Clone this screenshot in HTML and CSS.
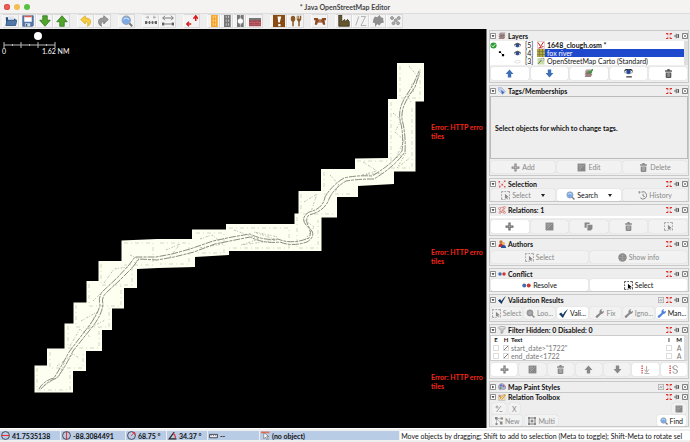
FILE: index.html
```html
<!DOCTYPE html>
<html lang="en">
<head>
<meta charset="utf-8">
<title>Java OpenStreetMap Editor</title>
<link rel="stylesheet" href="styles.css">
</head>
<body>
<svg class="defs" aria-hidden="true">
  <symbol id="arrow-up" viewBox="0 0 16 16"><path d="M8 1 15 9H11V15H5V9H1Z"/></symbol>
  <symbol id="arrow-down" viewBox="0 0 16 16"><path d="M8 15 15 7H11V1H5V7H1Z"/></symbol>
  <symbol id="plus" viewBox="0 0 16 16"><path d="M6 1h4v5h5v4h-5v5H6v-5H1V6h5Z"/><path d="M8 3v10M3 8h10" stroke="#fff" stroke-opacity=".45" stroke-width="1"/></symbol>
  <symbol id="edit" viewBox="0 0 16 16"><path d="M1 1h14v14H1Z"/><path d="M3 13 13 3M3 4h6M3 7h4" stroke="#bbb" stroke-width="1"/></symbol>
  <symbol id="trash" viewBox="0 0 16 16"><path d="M6 0h4v2h4v3H2V2h4ZM3 6h10v8q0 2-2 2H5q-2 0-2-2Z"/><path d="M6 7v7M8 7v7M10 7v7" stroke="#ccc" stroke-width=".8"/></symbol>
  <symbol id="copy" viewBox="0 0 16 16"><path d="M1 1h9v3H5v6H1Z"/><path d="M6 5h9v7l-3 3H6Z"/><path d="M5.500 11V4.500H11" fill="none" stroke="#ddd"/></symbol>
  <symbol id="select" viewBox="0 0 16 16"><path d="M1 4V1h3M6 1h3M11 1h4v3M15 6v3M1 6v3M1 11v4h3M15 11v4M6 15h2" fill="none" stroke="currentColor" stroke-width="1.300"/><path d="M7 5v9l2-2 2 3 1-1-1-3h3Z"/></symbol>
  <symbol id="lens" viewBox="0 0 16 16"><path d="m10 10 5 5" stroke="#777" stroke-width="2.500"/><circle cx="7" cy="7" r="5.500" fill="#78a9e8" stroke="#98a4b4" stroke-width="1.500"/><path d="M3.500 6q3-4 7 0" stroke="#d5e7ff" fill="none" stroke-width="1.500"/></symbol>
  <symbol id="lens-gray" viewBox="0 0 16 16"><path d="m10 10 5 5" stroke="#888" stroke-width="2.500"/><circle cx="7" cy="7" r="5.500" fill="#999" stroke="#888"/><path d="M3 7h8M7 3v8" stroke="#bbb"/></symbol>
  <symbol id="history" viewBox="0 0 16 16"><path d="M6 2a6.500 6.500 0 1 1-2 10M9 5v4l3 1" fill="none" stroke="#777" stroke-width="1.500"/><path d="M0 2h5M2.500 0v5" stroke="#777"/></symbol>
  <symbol id="check" viewBox="0 0 16 16"><path d="m0 9 4-3 3 4Q10 4 16 0 11 8 7 16Z"/></symbol>
  <symbol id="wrench" viewBox="0 0 16 16"><path d="M1 13 8 7q-1-4 2-6l3-1-2 3 2 2 3-2q0 5-5 6L4 16Q1 16 1 13Z"/></symbol>
  <symbol id="eye" viewBox="0 0 16 16"><path d="M0 8Q8 0 16 8 8 15 0 8Z" fill="#fff" stroke="#555"/><circle cx="8" cy="8" r="4" fill="#224898"/><path d="M1 6Q8 0 15 6" fill="none" stroke="#222" stroke-width="2"/></symbol>
  <symbol id="closed-eye" viewBox="0 0 16 16"><path d="M1 9Q8 1 15 9 8 15 1 9Z" fill="#fff" stroke="#bbb"/></symbol>
  <symbol id="stack" viewBox="0 0 16 16"><path d="M4 1h11l-3 5H1Z" fill="#ad9a9a"/><path d="M4 5h11l-3 5H1Z" fill="#8b7474"/><path d="M4 9h11l-3 5H1Z" fill="#9f8080"/></symbol>
  <symbol id="fold" viewBox="0 0 16 16"><rect x="1" y="1" width="14" height="14" rx="2" fill="#fff" stroke="#555" stroke-width="2"/><path d="M4 6h8l-4 5Z" fill="#222"/></symbol>
  <symbol id="unfold" viewBox="0 0 16 16"><rect x="1" y="1" width="14" height="14" rx="2" fill="#fff" stroke="#555" stroke-width="2"/><path d="m6 4 5 4-5 4Z" fill="#222"/></symbol>
  <symbol id="jump" viewBox="0 0 16 16"><path d="M0 0h6v6H4V3H0ZM16 0h-6v6h2V3h4ZM0 16h6v-6H4v3H0ZM16 16h-6v-6h2v3h4Z" fill="#e02f2f"/></symbol>
  <symbol id="pin" viewBox="0 0 16 16"><path d="M0 8h6M6 2v12M7 5h5v6H7M12 3v10" fill="none" stroke="#444" stroke-width="2"/></symbol>
  <symbol id="close" viewBox="0 0 16 16"><rect x="1" y="1" width="14" height="14" rx="2" fill="#fff" stroke="#444" stroke-width="2"/><path d="m4 4 8 8M12 4l-8 8" stroke="#777" stroke-width="2"/></symbol>
  <symbol id="prefs" viewBox="0 0 16 16"><rect x="1" y="1" width="14" height="14" fill="#eee" stroke="#aaa" stroke-width="2"/><path d="m4 11 3-5 2 5 3-6" fill="none" stroke="#888" stroke-width="1.500"/></symbol>
  <symbol id="tag" viewBox="0 0 16 16"><path d="M1 1h6l8 8-6 6-8-8Z" fill="#c1cfea" stroke="#8ea0c8"/><path d="m6 6 7 5-5 3Z" fill="#4067b4"/></symbol>
  <symbol id="sel-head" viewBox="0 0 16 16"><path d="M2 3 8 9l5-7M3 13l5-4 6 5M2 4v9" fill="none" stroke="#e99" stroke-width="1"/><path d="M1 2h3v3H1zM7 8h3v3H7zM12 1h3v3h-3zM2 12h3v3H2zM12 12h3v3h-3z" fill="#e25555"/></symbol>
  <symbol id="relation" viewBox="0 0 16 16"><path d="M3 5 7 3l6-1-2 6-6 4-2-7m8 3 3 5-9-1" fill="none" stroke="#cc746a" stroke-width="1.500"/><g fill="#f2d8d2" stroke="#c66"><circle cx="3" cy="5" r="2"/><circle cx="13" cy="3" r="2"/><circle cx="10" cy="8" r="2"/><circle cx="4" cy="13" r="2"/><circle cx="13" cy="13" r="2"/></g></symbol>
  <symbol id="authors" viewBox="0 0 16 16"><circle cx="6" cy="4" r="3.500" fill="#c47938"/><path d="M1 14q0-7 5-7t5 7Z" fill="#c62f2b"/><circle cx="11" cy="7" r="3" fill="#e9b35e"/><path d="M6 16q0-6 5-6t5 6Z" fill="#254f9f"/></symbol>
  <symbol id="conflict" viewBox="0 0 16 16"><circle cx="4" cy="8" r="3.500" fill="#426cae"/><circle cx="12" cy="8" r="3.500" fill="#cf3636"/></symbol>
  <symbol id="funnel" viewBox="0 0 16 16"><ellipse cx="8" cy="3" rx="7" ry="2" fill="#eee" stroke="#777"/><path d="M1 4 6 9v6l4-2V9l5-5" fill="#ccc" stroke="#777"/></symbol>
  <symbol id="palette" viewBox="0 0 16 16"><path d="M2 4Q8-2 14 5t-4 8q-4-2-5 1Q-1 12 2 4Z" fill="#aeb3d0" stroke="#778"/><circle cx="6" cy="5" r="2" fill="#4169c7"/><circle cx="11" cy="6" r="2" fill="#a24fa8"/><circle cx="5" cy="10" r="2" fill="#599e52"/></symbol>
  <symbol id="toolbox" viewBox="0 0 16 16"><path d="M1 4h13v11H1Z" fill="#eee4ca" stroke="#aaa"/><path d="m3 13 9-10 3 1-8 10M2 7l4 3" stroke="#d7a12e" stroke-width="2" fill="none"/><circle cx="4" cy="6" r="2" fill="#dd7563"/></symbol>
  <symbol id="dots-down" viewBox="0 0 16 16"><path d="M2 1v2M2 5v2M2 9v2M2 13v2" stroke="#e03434" stroke-width="2.500"/><path d="M10 2v9M6 8l4 5 4-5M6 15h9" stroke="#888" stroke-width="1.300" fill="none"/></symbol>
  <symbol id="dots-turn" viewBox="0 0 16 16"><path d="M2 1v2M2 5v2M2 9v2M2 13v2" stroke="#e03434" stroke-width="2.500"/><path d="M7 5q0-4 4-4t4 4M7 3v3h3M15 11q0 4-4 4t-4-4M15 13v-3h-3M8 8h6" stroke="#888" stroke-width="1.300" fill="none"/></symbol>
</svg>

<header class="titlebar">
  <div class="lights"><button class="light red" aria-label="Close"></button><button class="light amber" aria-label="Minimize"></button><button class="light green" aria-label="Zoom"></button></div>
  <h1>* Java OpenStreetMap Editor</h1>
</header>

<nav class="toolbar" aria-label="Tools">
  <div class="group">
    <button aria-label="Open"><svg viewBox="0 0 16 16"><path d="M1 3h5l1 2h7v9H2Z" fill="#284f83"/><path d="M4 2h8v5H4Z" fill="#dce5ee"/><path d="M1 14 3 7h13l-2 7Z" fill="#5278a7" stroke="#31537d"/></svg></button>
    <button aria-label="Save"><svg viewBox="0 0 16 16"><path d="M1 1h14v13l-1 1H1Z" fill="#5476aa" stroke="#425f94"/><path d="M3 1h10v8H3Z" fill="#fff"/><path d="M3 1h10v2H3Z" fill="#d75d54"/><path d="M4 11h7v4H4Z" fill="#d9dfe7"/><path d="M5 12h2v3H5Z" fill="#465d7e"/></svg></button>
    <button aria-label="Download"><svg viewBox="0 0 16 16" fill="#51a52b" stroke="#2c701c"><use href="#arrow-down"/></svg></button>
    <button aria-label="Upload"><svg viewBox="0 0 16 16" fill="#51a52b" stroke="#2c701c"><use href="#arrow-up"/></svg></button>
  </div>
  <div class="group">
    <button aria-label="Undo"><svg viewBox="0 0 16 16"><path d="M1 6 7 1v3q8 0 7 6 0 3-4 5 2-6-3-6v3Z" fill="#f6cd3e" stroke="#d6a822"/></svg></button>
    <button aria-label="Redo"><svg viewBox="0 0 16 16"><path d="M15 6 9 1v3q-8 0-7 6 0 3 4 5-2-6 3-6v3Z" fill="#9a9a9a" stroke="#777"/></svg></button>
  </div>
  <div class="group"><button aria-label="Search"><svg><use href="#lens"/></svg></button></div>
  <div class="group">
    <button aria-label="Distribute nodes"><svg viewBox="0 0 16 16"><path d="M1 3h4m6 0h4M4 1v4m8-4v4M0 10h16" stroke="#999"/><path d="M0 8h3v4H0zM5 8h2v4H5zM9 8h2v4H9zM13 8h3v4h-3z" fill="#666"/></svg></button>
    <button aria-label="Align nodes"><svg viewBox="0 0 16 16"><path d="M1 4h14M4 1 1 4l3 3M12 1l3 3-3 3M2 12h12" fill="none" stroke="#777" stroke-width="1.300"/><path d="M0 10h3v4H0zM13 10h3v4h-3z" fill="#666"/></svg></button>
  </div>
  <div class="group"><button aria-label="Follow line"><svg viewBox="0 0 16 16"><path d="M7 12H2M4 9l-3 3 3 3M13 8V2M10 5l3-4 3 4" fill="none" stroke="#dc1d20" stroke-width="2"/></svg></button></div>
  <div class="group">
    <button class="narrow" aria-label="Motorway"><svg viewBox="0 0 16 16"><path d="M4 0h9v16H4Z" fill="#f8a52b"/><path d="M7 1v14M10 1v14" stroke="#fff" stroke-opacity=".7" stroke-dasharray="3 2"/></svg></button>
    <button class="narrow" aria-label="Road"><svg viewBox="0 0 16 16"><path d="M4 0h9v16H4Z" fill="#777"/><path d="M7 1v14M10 1v14" stroke="#fff" stroke-opacity=".7" stroke-dasharray="3 2"/></svg></button>
    <button class="narrow" aria-label="Crossing"><svg viewBox="0 0 16 16"><path d="M4 0h9v16H4Z" fill="#777"/><path d="M8.500 0v16" stroke="#fff" stroke-dasharray="2 1"/><circle cx="8.500" cy="8" r="3.500" fill="#fff"/></svg></button>
    <button aria-label="Wall"><svg viewBox="0 0 16 16"><path d="M0 4h16v11H0Z" fill="#a7464d"/><path d="M0 4h16v3H0Z" fill="#777"/><path d="M0 10h16M0 13h16M4 7v3M11 7v3M7 10v3M14 10v3" stroke="#c98084" stroke-width=".6"/></svg></button>
  </div>
  <div class="group">
    <button aria-label="Attraction"><svg viewBox="0 0 16 16"><path d="M0 0h16v16H0Z" fill="#8b4c13"/><path d="M6 2h5L9 10H7ZM7 12h3v3H7Z" fill="#fff"/></svg></button>
    <button aria-label="Restaurant"><svg viewBox="0 0 16 16" fill="#8b5924"><ellipse cx="4" cy="5" rx="3" ry="4"/><path d="M3 8h2v7H3ZM9 1h1v4h1V1h1v4h1V1h2v5l-2 3v6h-2V9L9 6Z"/></svg></button>
  </div>
  <div class="group"><button aria-label="Bench"><svg viewBox="0 0 16 16"><path d="M0 4h5l1 2h4l1-2h5v3h-2l1 6h-3l-1-3H5l-1 3H1l1-6H0Z" fill="#8f481f"/><path d="M6 8h4" stroke="#e0bba5"/></svg></button></div>
  <div class="group">
    <button aria-label="Industrial"><svg viewBox="0 0 16 16"><path d="M1 0h4v9l4-3v3l4-3 2 3v6H1Z" fill="#66562b" stroke="#332e1b"/></svg></button>
    <button aria-label="Parallel"><svg viewBox="0 0 16 16"><path d="M1 14 5 2M8 2h6L8 14h7" fill="none" stroke="#aaa" stroke-width="1.200"/></svg></button>
    <button aria-label="Area"><svg viewBox="0 0 16 16"><path d="m2 5 2-3 3 1 3-3 2 3 3 1v3l1 3-4 1-2 3-3-2-3 4v-5l-3-1Z" fill="#8f8f8f"/></svg></button>
    <button aria-label="Nodes"><svg viewBox="0 0 16 16" fill="#aaa" stroke="#888"><circle cx="4" cy="4" r="2"/><circle cx="9" cy="7" r="2"/><circle cx="13" cy="4" r="2"/><circle cx="6" cy="11" r="2"/><circle cx="12" cy="11" r="2"/></svg></button>
  </div>
</nav>

<main>
  <section class="map" aria-label="Map">
    <svg viewBox="0 29 486 399" preserveAspectRatio="xMinYMin slice">
      <g fill="#fdfff0">
        <path d="M397 63h27v38.500h-8.500v70H394V184l-36 2v11H337v20.500h-15.500V251H229v4l-34 2v10l-37 1-21 1v19h-13v20.500h-12V330h-10v21H86v20H73v21.500H34.500v-27H47v-17h17.500v-25h9v-21h13V281h12v-20h23v-20.500L157 239h35v-9.500h34V224h68.500v-10.500h4V191H321v-22h34v-10.500l33-.5V99h9Z"/>
      </g>
      <g class="seams">
        <path d="M400 66v32h20V66M391 102v66h21v-60M357 161h30M324 172v22h29M301 194v20h32M297 217v31h21v-28M229 228h60v20h-60M196 233h28v20h-28M160 243h29v21h-29M124 243h29v22h-29M101 264v21h31v-21M89 284v22h32v-22M76 305v22h33v-22M68 326v22h31v-22M50 352v16h33v-16M37 368v22h33v-22"/>
      </g>
      <path class="terrain" d="M409 66l10 12-8 7 3 6-7 4 4 7M393 113l8 7-6 12 9 8-8 18 10-5-9 15 14-11M363 162l14 9-15 4 20-2M330 175l9 10-4 7M304 202l13-8-6 18M303 219l11 8-9 13M234 230l25 9-18 6 36-5-23-8 24 5M200 239l12-4 11 9-24 4M166 250l14-6-10 13M130 255l9 4-5 4M104 283l10-14 14-2M93 301l7-7M81 321l16-9-9 17 17-9M70 346l10-17 10 8M57 366l16-12 6 4M44 386l15-10 6-15"/>
      <g class="river">
        <path d="M39 389Q43 381 54 378 61 367 69 352L85 331Q98 315 100 305 98 298 102 292L117 278 129 265 135 257 156 257 172 254 190 249 213 241 232 237 250 234Q264 241 278 239 292 245 309 238 313 231 306 225 300 218 309 212 323 209 325 197 332 185 344 178 357 175 372 176 391 165 402 151 404 134 400 120 398 108 406 96L413 85 419 71"/>
        <path d="M41 389Q46 382 57 378 66 366 73 351L89 331Q102 316 103 304 101 298 106 293L120 280 132 268 139 259 157 260 174 257 194 252 215 244 235 240 250 237Q264 244 280 242 292 247 307 242 315 237 312 231 303 221 309 215 325 211 329 199 334 188 346 181 358 179 374 179 394 167 405 152 406 135 402 119 401 108 409 96L415 87 420 72"/>
      </g>
      <g class="tile-errors"><text x="431" y="130">Error: HTTP erro</text><text x="431" y="139">tiles</text><text x="431" y="255">Error: HTTP erro</text><text x="431" y="264">tiles</text><text x="431" y="380">Error: HTTP erro</text><text x="431" y="389">tiles</text></g>
      <g class="scale"><circle cx="38" cy="36" r="4"/><path d="M4 45h51M4 42v6M21 42v6M38 42v6M55 42v6M12.500 44v2M29.500 44v2M46.500 44v2"/><text x="2" y="54">0</text><text x="42" y="54">1.62 NM</text></g>
    </svg>
  </section>

  <aside class="dock">
    <section class="panel">
      <header><button aria-label="Collapse"><svg><use href="#fold"/></svg></button><svg class="mark"><use href="#stack"/></svg><h2>Layers</h2><button aria-label="Jump"><svg><use href="#jump"/></svg></button><button aria-label="Pin"><svg><use href="#pin"/></svg></button><button aria-label="Close"><svg><use href="#close"/></svg></button></header>
      <ul class="layers">
        <li class="active"><svg viewBox="0 0 16 16"><circle cx="8" cy="8" r="7" fill="#2f9d35"/><path d="m4 8 3 3 5-6" fill="none" stroke="#fff" stroke-width="2"/></svg><i></i><svg><use href="#eye"/></svg><span>[5]</span><b><svg viewBox="0 0 16 16"><path d="M1 1h14v14H1Z" fill="#fff" stroke="#c99"/><path d="m2 3 5 8 6-9M3 14l10-3" fill="none" stroke="#c22" stroke-width="2"/></svg>1648_clough.osm *</b></li>
        <li class="chosen"><i></i><svg viewBox="0 0 16 16"><path d="M2 3h5v4H2ZM9 9h5v5H9Z"/><path d="m5 5 7 7" stroke="#000"/></svg><svg><use href="#eye"/></svg><span>[4]</span><b><svg viewBox="0 0 16 16"><path d="M0 0h16v16H0Z" fill="#b6a745"/><path d="M5 0v16M11 0v16M0 5h16M0 11h16" stroke="#5c6628"/></svg>fox river</b></li>
        <li><i></i><i></i><svg><use href="#closed-eye"/></svg><span>[3]</span><b><svg viewBox="0 0 16 16"><path d="M1 2h14v13H1Z" fill="#c8dda8"/><path d="m2 14 6-7 6-5" stroke="#698b52" stroke-width="2"/><circle cx="11" cy="5" r="3" fill="#ddd" stroke="#888"/></svg>OpenStreetMap Carto (Standard)</b></li>
      </ul>
      <div class="actions tall">
        <button aria-label="Move up"><svg fill="#3d70b5"><use href="#arrow-up"/></svg></button><button aria-label="Move down"><svg fill="#3d70b5"><use href="#arrow-down"/></svg></button><button aria-label="Activate"><svg viewBox="0 0 16 16"><use href="#stack"/><path d="m8 4 3 3 5-7" stroke="#2d9c32" stroke-width="2.500" fill="none"/></svg></button><button aria-label="Show or hide"><svg viewBox="0 0 16 16"><use href="#eye" y="-3"/><path d="M4 14h10" stroke="#222" stroke-width="2"/></svg></button><button aria-label="Delete layer"><svg fill="#555"><use href="#trash"/></svg></button>
      </div>
    </section>

    <section class="panel">
      <header><button aria-label="Collapse"><svg><use href="#fold"/></svg></button><svg class="mark"><use href="#tag"/></svg><h2>Tags/Memberships</h2><button aria-label="Jump"><svg><use href="#jump"/></svg></button><button aria-label="Pin"><svg><use href="#pin"/></svg></button><button aria-label="Close"><svg><use href="#close"/></svg></button></header>
      <p class="notice">Select objects for which to change tags.</p>
      <div class="actions"><button disabled><svg><use href="#plus"/></svg>Add</button><button disabled><svg><use href="#edit"/></svg>Edit</button><button disabled><svg><use href="#trash"/></svg>Delete</button></div>
    </section>

    <section class="panel">
      <header><button aria-label="Collapse"><svg><use href="#fold"/></svg></button><svg class="mark"><use href="#sel-head"/></svg><h2>Selection</h2><button aria-label="Jump"><svg><use href="#jump"/></svg></button><button aria-label="Pin"><svg><use href="#pin"/></svg></button><button aria-label="Close"><svg><use href="#close"/></svg></button></header>
      <div class="actions flat"><button class="dim"><svg><use href="#select"/></svg>Select<i class="caret"></i></button><button><svg><use href="#lens"/></svg>Search<i class="caret"></i></button><button disabled><svg><use href="#history"/></svg>History</button></div>
    </section>

    <section class="panel">
      <header><button aria-label="Collapse"><svg><use href="#fold"/></svg></button><svg class="mark"><use href="#relation"/></svg><h2>Relations: 1</h2><button aria-label="Jump"><svg><use href="#jump"/></svg></button><button aria-label="Pin"><svg><use href="#pin"/></svg></button><button aria-label="Close"><svg><use href="#close"/></svg></button></header>
      <div class="sliver"></div>
      <div class="actions tall"><button aria-label="New relation"><svg fill="#666"><use href="#plus"/></svg></button><button disabled aria-label="Edit"><svg><use href="#edit"/></svg></button><button disabled aria-label="Duplicate"><svg><use href="#copy"/></svg></button><button disabled aria-label="Delete"><svg><use href="#trash"/></svg></button><button disabled aria-label="Select"><svg><use href="#select"/></svg></button></div>
    </section>

    <section class="panel">
      <header><button aria-label="Collapse"><svg><use href="#fold"/></svg></button><svg class="mark"><use href="#authors"/></svg><h2>Authors</h2><button aria-label="Jump"><svg><use href="#jump"/></svg></button><button aria-label="Pin"><svg><use href="#pin"/></svg></button><button aria-label="Close"><svg><use href="#close"/></svg></button></header>
      <div class="actions"><button disabled><svg><use href="#select"/></svg>Select</button><button disabled><svg viewBox="0 0 16 16"><circle cx="8" cy="8" r="7.500"/><path d="M1 8h14M8 1v14M3 3q5 4 10 0M3 13q5-4 10 0" fill="none" stroke="#aaa"/></svg>Show info</button></div>
    </section>

    <section class="panel">
      <header><button aria-label="Collapse"><svg><use href="#fold"/></svg></button><svg class="mark"><use href="#conflict"/></svg><h2>Conflict</h2><button aria-label="Jump"><svg><use href="#jump"/></svg></button><button aria-label="Pin"><svg><use href="#pin"/></svg></button><button aria-label="Close"><svg><use href="#close"/></svg></button></header>
      <div class="actions flat"><button><svg><use href="#conflict"/></svg>Resolve</button><button><svg><use href="#select"/></svg>Select</button></div>
    </section>

    <section class="panel">
      <header><button aria-label="Collapse"><svg><use href="#fold"/></svg></button><svg class="mark navy"><use href="#check"/></svg><h2>Validation Results</h2><button aria-label="Preferences"><svg><use href="#prefs"/></svg></button><button aria-label="Jump"><svg><use href="#jump"/></svg></button><button aria-label="Pin"><svg><use href="#pin"/></svg></button><button aria-label="Close"><svg><use href="#close"/></svg></button></header>
      <div class="actions"><button disabled><svg><use href="#select"/></svg>Select</button><button disabled><svg><use href="#lens-gray"/></svg>Loo...</button><button><svg class="navy"><use href="#check"/></svg>Vali...</button><button disabled><svg><use href="#wrench"/></svg>Fix</button><button disabled><svg><use href="#wrench"/></svg>Igno...</button><button><svg fill="#4e7fe0"><use href="#wrench"/></svg>Man...</button></div>
    </section>

    <section class="panel">
      <header><button aria-label="Collapse"><svg><use href="#fold"/></svg></button><svg class="mark"><use href="#funnel"/></svg><h2>Filter Hidden: 0 Disabled: 0</h2><button aria-label="Jump"><svg><use href="#jump"/></svg></button><button aria-label="Pin"><svg><use href="#pin"/></svg></button><button aria-label="Close"><svg><use href="#close"/></svg></button></header>
      <div class="filters">
        <table>
          <thead><tr><th>E</th><th>H</th><th class="rule">Text</th><th>I</th><th>M</th></tr></thead>
          <tbody>
            <tr><td><input type="checkbox" aria-label="Enable first filter"></td><td><input type="checkbox" checked aria-label="Hide first filter"></td><td class="rule">start_date&gt;"1722"</td><td><input type="checkbox" aria-label="Invert first filter"></td><td>A</td></tr>
            <tr><td><input type="checkbox" aria-label="Enable second filter"></td><td><input type="checkbox" checked aria-label="Hide second filter"></td><td class="rule">end_date&lt;1722</td><td><input type="checkbox" aria-label="Invert second filter"></td><td>A</td></tr>
          </tbody>
        </table>
      </div>
      <div class="actions tall"><button aria-label="Add filter"><svg fill="#777"><use href="#plus"/></svg></button><button disabled aria-label="Edit filter"><svg><use href="#edit"/></svg></button><button disabled aria-label="Delete filter"><svg><use href="#trash"/></svg></button><button disabled aria-label="Filter up"><svg><use href="#arrow-up"/></svg></button><button disabled aria-label="Filter down"><svg><use href="#arrow-down"/></svg></button><button aria-label="Sort"><svg><use href="#dots-down"/></svg></button><button aria-label="Reverse"><svg><use href="#dots-turn"/></svg></button></div>
    </section>

    <section class="panel">
      <header><button aria-label="Expand"><svg><use href="#unfold"/></svg></button><svg class="mark"><use href="#palette"/></svg><h2>Map Paint Styles</h2><button aria-label="Preferences"><svg><use href="#prefs"/></svg></button><button aria-label="Jump"><svg><use href="#jump"/></svg></button><button aria-label="Pin"><svg><use href="#pin"/></svg></button><button aria-label="Close"><svg><use href="#close"/></svg></button></header>
    </section>

    <section class="panel joined">
      <header><button aria-label="Collapse"><svg><use href="#fold"/></svg></button><svg class="mark"><use href="#toolbox"/></svg><h2>Relation Toolbox</h2><button aria-label="Jump"><svg><use href="#jump"/></svg></button><button aria-label="Pin"><svg><use href="#pin"/></svg></button><button aria-label="Close"><svg><use href="#close"/></svg></button></header>
      <div class="tools"><button disabled aria-label="Add or remove members"><svg viewBox="0 0 16 16"><path d="M1 4h6M4 1v6M3 14 12 2M9 13h6" stroke="#888" stroke-width="1.500"/></svg></button><button disabled>X</button><button class="end" disabled aria-label="Edit"><svg><use href="#edit"/></svg></button></div>
      <div class="tools"><button disabled><svg viewBox="0 0 16 16"><path d="M3 3h10M3 3v11M3 3l9 9" stroke="#888"/><path d="M0 0h5v5H0zM11 1h5v4h-5zM1 12h4v4H1zM10 9h5v6h-5z"/></svg>New</button><button disabled><svg viewBox="0 0 16 16"><path d="M2 2h12v12H2Z" fill="none" stroke="#777" stroke-width="2"/><path d="M0 0h4v4H0zM12 0h4v4h-4zM0 12h4v4H0zM12 12h4v4h-4z"/><circle cx="8" cy="8" r="3"/></svg>Multi</button><button class="end"><svg><use href="#lens"/></svg>Find</button></div>
    </section>
  </aside>
</main>

<footer class="status">
  <output class="lat"><svg viewBox="0 0 16 16"><circle cx="8" cy="8" r="7" fill="none" stroke="#334" stroke-width="1.500"/><path d="M1 8h14" stroke="#e33" stroke-width="2"/></svg>41.7535138</output>
  <output class="lon"><svg viewBox="0 0 16 16"><circle cx="8" cy="8" r="7" fill="none" stroke="#334" stroke-width="1.500"/><path d="M8 1v14" stroke="#e33" stroke-width="2"/></svg>-88.3084491</output>
  <output class="angle"><svg viewBox="0 0 16 16"><circle cx="8" cy="8" r="7" fill="none" stroke="#334" stroke-width="1.500"/><path d="m7 9 6-6M9 3h5v5" fill="none" stroke="#e33" stroke-width="1.500"/></svg>68.75 °</output>
  <output class="angle"><svg viewBox="0 0 16 16"><path d="M11 2 2 14h13" fill="none" stroke="#222" stroke-width="2"/><path d="M9 4q5 4 4 9" fill="none" stroke="#d33" stroke-width="2"/></svg>34.37 °</output>
  <output class="dist"><svg viewBox="0 0 16 16"><path d="M1 6h14v6H1Z" fill="#eee" stroke="#334" stroke-width="1.500"/><path d="M4 7v2M8 7v2M12 7v2" stroke="#334"/></svg>--</output>
  <output class="object"><svg viewBox="0 0 16 16"><path d="M0 1h15v3H0Z" fill="#e66f50"/><path d="M5 3v11l3-3 3 5 2-1-3-5h4Z" fill="#fff" stroke="#555"/></svg>(no object)</output>
  <p>Move objects by dragging; Shift to add to selection (Meta to toggle); Shift-Meta to rotate sel</p>
</footer>
</body>
</html>
```
FILE: styles.css
```css
* { box-sizing: border-box; }

body {
  margin: 0;
  height: 100vh;
  display: flex;
  flex-direction: column;
  overflow: hidden;
  background: #eeeeee;
  color: #111;
  font: 400 7px/8px Lato, "Noto Sans", sans-serif;
}

button {
  border: 0;
  padding: 0;
  background: none;
  color: inherit;
  font: inherit;
}

h1, h2, p, ul { margin: 0; padding: 0; }

svg { display: block; flex: none; }

.defs { position: absolute; width: 0; height: 0; }

.titlebar {
  flex: none;
  display: grid;
  grid-template-columns: 1fr auto 1fr;
  align-items: center;
  height: 14px;
  background: #f4f3f2;
  border-bottom: 1px solid #dddddc;
}

.titlebar h1 {
  color: #444;
  font-size: 7px;
  font-weight: 700;
}

.lights { display: flex; gap: 4px; padding-left: 4px; }

.light { width: 6px; height: 6px; border-radius: 50%; }
.red { background: #ed5f57; box-shadow: inset 0 0 0 1px #da5149; }
.amber { background: #f4bd4f; }
.green { background: #56c045; }

.toolbar {
  flex: none;
  display: flex;
  gap: 7px;
  height: 15px;
  padding: 0 2px 1px;
}

.group { display: flex; }

.group button {
  display: grid;
  place-items: center;
  width: 17px;
  border: 1px solid #dadada;
  border-left-color: #fafafa;
  background: #f3f3f3;
}

.group .narrow { width: 13px; }
.group svg { width: 12px; height: 12px; }

main { flex: 1; display: flex; min-height: 0; }

.map {
  flex: 1;
  min-width: 0;
  background: #000;
  border-right: 1px solid #777;
}

.map svg { width: 100%; height: 100%; }

.river path { fill: none; stroke: #8b8b82; stroke-width: 1; stroke-dasharray: 7 1 3 1; }
.terrain { fill: none; stroke: #bdbeb2; stroke-width: 1; stroke-dasharray: 2 1 1 2; }
.seams path { fill: none; stroke: #d6d8c7; stroke-width: 1; stroke-dasharray: 4 3 1 3; }
.tile-errors text { fill: #f32718; font-size: 7px; font-weight: 700; }
.scale { fill: #fff; font-size: 7px; }
.scale path { fill: none; stroke: #bbb; stroke-width: 1; }

.dock {
  flex: none;
  display: flex;
  flex-direction: column;
  gap: 2px;
  width: 203px;
  padding: 1px 1px 0 2px;
}

.panel { border: 1px solid #c9c9c9; }

.panel header {
  display: flex;
  align-items: center;
  gap: 2px;
  height: 10px;
}

.panel header button svg { width: 6px; height: 6px; }
.panel header .mark { width: 8px; height: 8px; }
.panel h2 { flex: 1; font-size: 7px; font-weight: 700; }
.navy { fill: #173b60; }

.panel.joined { margin-top: -3px; border-top: 0; }

.layers {
  height: 24px;
  background: #fff;
  border-right: 4px solid #dedede;
  list-style: none;
}

.layers li {
  display: grid;
  grid-template-columns: 8px 16px 11px 12px 1fr;
  align-items: center;
  height: 8px;
}

.layers li > svg { width: 7px; height: 7px; }
.layers b { display: flex; align-items: center; gap: 2px; font-weight: 400; }
.layers b svg { width: 8px; height: 8px; }
.layers .active b { font-weight: 700; }
.layers .chosen b { background: #1f49cc; color: #fff; }

.actions { display: flex; gap: 2px; padding: 2px 1px; }

.actions button, .tools button {
  flex: 1 1 0;
  display: flex;
  align-items: center;
  justify-content: center;
  gap: 2px;
  min-width: 0;
  height: 12px;
  border-radius: 2px;
  background: #fff;
  box-shadow: 0 0 1px #bbb;
  white-space: nowrap;
}

.actions svg { width: 9px; height: 9px; }
.actions.tall button { height: 13px; }
.actions.flat { padding: 0 1px; }

.actions button:disabled, .tools button:disabled, .actions .dim {
  background: #f2f2f2;
  color: #888;
  fill: #888;
}

.caret {
  width: 0;
  margin-left: 8px;
  border: 2px solid transparent;
  border-top: 3px solid #222;
  border-bottom: 0;
}

.notice {
  height: 63px;
  padding: 27px 4px;
  border: 1px solid #bbb;
  font-weight: 700;
}

.sliver { height: 2px; margin-top: 1px; background: #fff; }

.filters {
  height: 26px;
  overflow: hidden;
  border: 1px solid #ccc;
  border-right: 4px solid #ddd;
  background: #fff;
}

.filters table { width: 100%; border-collapse: collapse; table-layout: fixed; }
.filters th, .filters td { width: 10px; height: 8px; padding: 0; text-align: center; }
.filters th { font-size: 6px; font-weight: 700; }
.filters td { color: #777; }
.filters .rule { width: auto; text-align: left; }

.filters input {
  appearance: none;
  display: block;
  width: 6px;
  height: 6px;
  margin: 0 auto;
  border: 1px solid #ddd;
}

.filters input:checked {
  background: linear-gradient(135deg, transparent 45%, #777 45% 60%, transparent 60%);
}

.tools { display: flex; gap: 3px; padding: 1px 2px 0; }
.tools button { flex: none; padding: 0 3px; height: 11px; }
.tools .end { margin-left: auto; }
.tools svg { width: 8px; height: 8px; }

.status {
  flex: none;
  display: flex;
  gap: 1px;
  height: 14px;
  padding: 2px 0;
  border-top: 1px solid #fff;
  background: #eee;
}

.status output, .status p {
  display: flex;
  align-items: center;
  gap: 2px;
  padding-left: 1px;
  background: #b9cce6;
  font-weight: 700;
  white-space: nowrap;
}

.status svg { width: 9px; height: 9px; }
.status .lat { width: 60px; }
.status .lon { width: 64px; }
.status .angle { width: 40px; }
.status .dist { width: 51px; }
.status .object { flex: 1; }
.status p { flex: 0 0 42%; overflow: hidden; background: #fff; font-weight: 400; }
```
